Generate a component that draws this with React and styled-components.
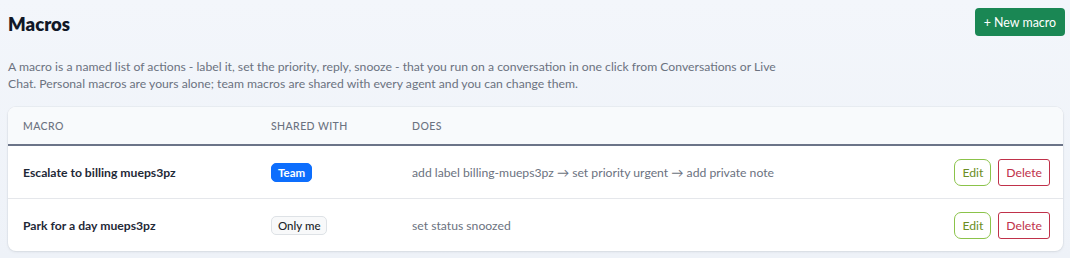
import React from "react";
import styled, { createGlobalStyle } from "styled-components";

const GlobalStyle = createGlobalStyle`
  html, body {
    margin: 0;
    padding: 0;
  }
  body {
    background: #f2f5fa;
    font-family: Lato, "Noto Sans", sans-serif;
    color: #1f2937;
  }
`;

const macros = [
  {
    name: "Escalate to billing mueps3pz",
    shared: "team",
    does: "add label billing-mueps3pz \u2192 set priority urgent \u2192 add private note",
  },
  {
    name: "Park for a day mueps3pz",
    shared: "me",
    does: "set status snoozed",
  },
];

export default function App() {
  return (
    <>
      <GlobalStyle />
      <Page>
        <Header>
          <Title>Macros</Title>
          <NewButton>+ New macro</NewButton>
        </Header>
        <Intro>
          A macro is a named list of actions - label it, set the priority, reply, snooze - that you
          run on a conversation in one click from Conversations or Live Chat. Personal macros are
          yours alone; team macros are shared with every agent and you can change them.
        </Intro>
        <Card>
          <Table>
            <thead>
              <tr>
                <Th $w="248px">Macro</Th>
                <Th $w="141px">Shared with</Th>
                <Th>Does</Th>
                <Th $w="140px" />
              </tr>
            </thead>
            <tbody>
              {macros.map((m) => (
                <Row key={m.name}>
                  <NameCell>{m.name}</NameCell>
                  <Td>
                    <Badge $team={m.shared === "team"}>
                      {m.shared === "team" ? "Team" : "Only me"}
                    </Badge>
                  </Td>
                  <DoesCell>{m.does}</DoesCell>
                  <ActionsCell>
                    <Actions>
                      <EditButton>Edit</EditButton>
                      <DeleteButton>Delete</DeleteButton>
                    </Actions>
                  </ActionsCell>
                </Row>
              ))}
            </tbody>
          </Table>
        </Card>
      </Page>
    </>
  );
}

const Page = styled.div`
  padding: 8px 7px 7px 8px;
  background: linear-gradient(180deg, #f3f6fb 0%, #eef2f8 100%);
  min-height: 258px;
  box-sizing: border-box;
`;

const Header = styled.div`
  display: flex;
  justify-content: space-between;
  align-items: flex-start;
`;

const Title = styled.h1`
  margin: 3px 0 0;
  font-size: 18.5px;
  font-weight: 800;
  color: #111827;
  line-height: 26px;
`;

const NewButton = styled.button`
  font-family: inherit;
  background: #1a8754;
  color: #fff;
  border: none;
  border-radius: 4px;
  height: 28px;
  padding: 0 9px;
  font-size: 12.4px;
  margin-right: -2px;
  cursor: pointer;
`;

const Intro = styled.p`
  margin: 21px 0 15px;
  max-width: 785px;
  font-size: 12.2px;
  line-height: 17px;
  color: #6b7280;
`;

const Card = styled.div`
  background: #fff;
  border-radius: 8px;
  box-shadow: 0 1px 3px rgba(15, 23, 42, 0.08), 0 0 0 1px rgba(15, 23, 42, 0.03);
  overflow: hidden;
`;

const Table = styled.table`
  width: 100%;
  border-collapse: collapse;
  table-layout: fixed;
`;

const Th = styled.th`
  box-sizing: border-box;
  width: ${(p) => p.$w || "auto"};
  text-align: left;
  background: #f8fafc;
  padding: 0 15px;
  height: 38px;
  font-size: 10.5px;
  font-weight: 500;
  letter-spacing: 0.4px;
  text-transform: uppercase;
  color: #6b7280;
  border-bottom: 2px solid #6b7488;
`;

const Row = styled.tr`
  & + & td {
    border-top: 1px solid #e5e7eb;
  }
`;

const Td = styled.td`
  padding: 0 15px;
  height: 52px;
  font-size: 12.2px;
  vertical-align: middle;
  white-space: nowrap;
`;

const NameCell = styled(Td)`
  font-weight: 700;
  color: #1f2937;
`;

const DoesCell = styled(Td)`
  color: #6b7280;
`;

const ActionsCell = styled(Td)`
  text-align: right;
  padding-right: 13px;
`;

const Actions = styled.div`
  display: inline-flex;
  gap: 7px;
`;

const Badge = styled.span`
  display: inline-block;
  font-size: 11.5px;
  font-weight: ${(p) => (p.$team ? 700 : 500)};
  line-height: 17px;
  padding: 0 6px;
  border-radius: 5px;
  background: ${(p) => (p.$team ? "#0d6efd" : "#f8f9fa")};
  color: ${(p) => (p.$team ? "#fff" : "#212529")};
  border: 1px solid ${(p) => (p.$team ? "#0d6efd" : "#dee2e6")};
`;

const ActionButton = styled.button`
  font-family: inherit;
  font-size: 12.2px;
  height: 27px;
  padding: 0 7px;
  background: #fff;
  cursor: pointer;
`;

const EditButton = styled(ActionButton)`
  color: #6b8e23;
  border: 1px solid #8bc34a;
  border-radius: 7px;
`;

const DeleteButton = styled(ActionButton)`
  color: #c0314a;
  border: 1px solid #c0314a;
  border-radius: 3px;
`;
